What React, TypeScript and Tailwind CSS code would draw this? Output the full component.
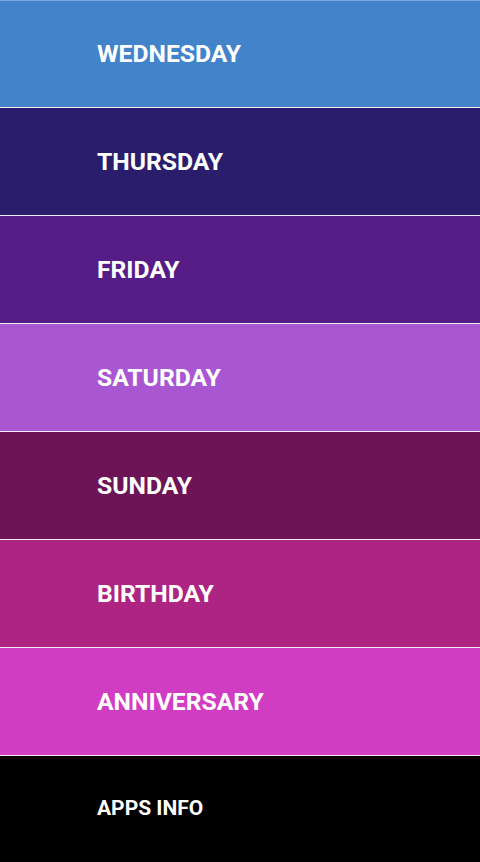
const days = [
  { label: "WEDNESDAY", bg: "bg-[#4383c9]" },
  { label: "THURSDAY", bg: "bg-[#2a1e6c]" },
  { label: "FRIDAY", bg: "bg-[#571d87]" },
  { label: "SATURDAY", bg: "bg-[#a956d3]" },
  { label: "SUNDAY", bg: "bg-[#6c1455]" },
  { label: "BIRTHDAY", bg: "bg-[#ad2483]" },
  { label: "ANNIVERSARY", bg: "bg-[#d13dc2]" },
];

export default function App() {
  return (
    <div className="flex h-[862px] w-[480px] flex-col bg-white font-['Roboto',sans-serif]">
      {days.map((d, i) => (
        <div key={d.label} className="flex flex-col">
          <button
            className={`flex h-[107px] items-center pl-[97px] text-left text-[24.7px] font-bold text-white ${d.bg} ${
              i === 0 ? "border-t border-[#7aa8dc]" : ""
            }`}
          >
            {d.label}
          </button>
          <div className="h-px bg-[#f2eef6]" />
        </div>
      ))}
      <button className="flex flex-1 items-center bg-black pl-[97px] text-left text-[21px] font-bold text-white">
        APPS INFO
      </button>
    </div>
  );
}
